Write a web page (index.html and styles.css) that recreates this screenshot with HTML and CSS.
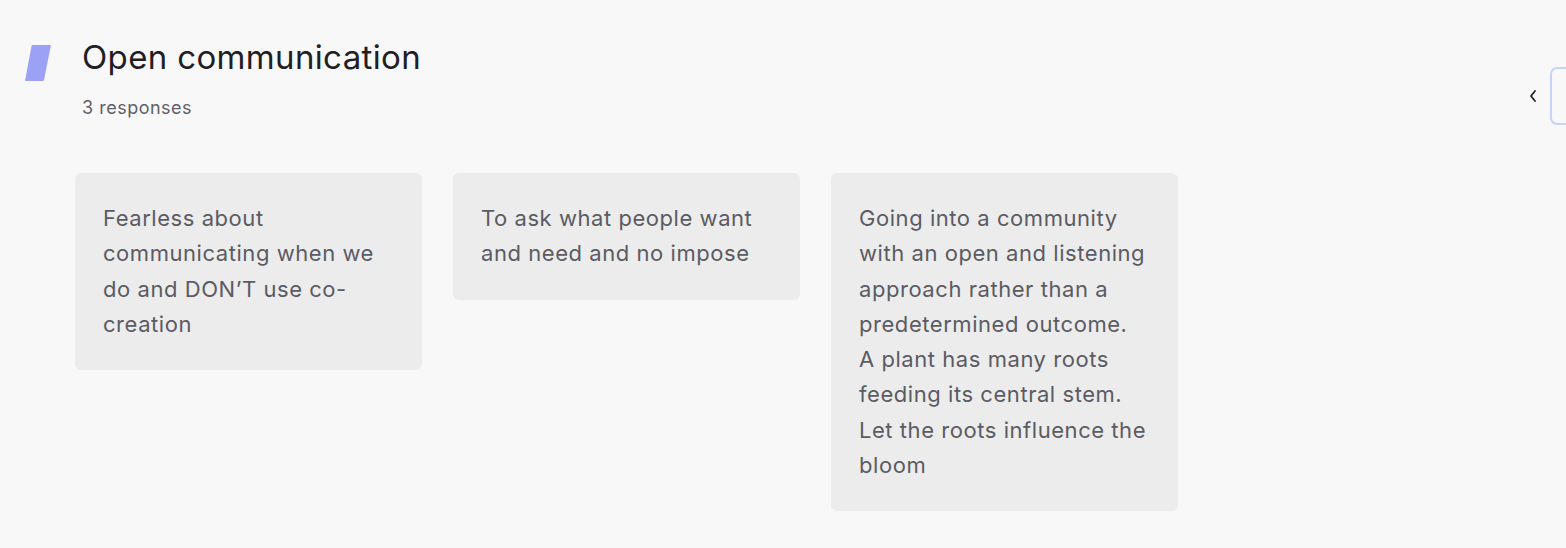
FILE: index.html
```html
<!DOCTYPE html>
<html lang="en">
<head>
<meta charset="utf-8">
<title>Open communication</title>
<link rel="stylesheet" href="styles.css">
</head>
<body>
<main class="page">
  <header class="header">
    <svg class="logo" width="28" height="40" viewBox="0 0 28 40" aria-hidden="true">
      <path d="M8.5 2 H26 Q27 2 26.8 3 L20 37 Q19.8 38 18.8 38 H2 Q1 38 1.2 37 L7.5 3 Q7.7 2 8.5 2 Z" fill="#9da1f5"/>
    </svg>
    <div class="titles">
      <h1 class="title">Open communication</h1>
      <p class="count">3 responses</p>
    </div>
  </header>
  <section class="cards">
    <article class="card">Fearless about communicating when we do and DON’T use co-creation</article>
    <article class="card">To ask what people want and need and no impose</article>
    <article class="card">Going into a community with an open and listening approach rather than a predetermined outcome. A plant has many roots feeding its central stem. Let the roots influence the bloom</article>
  </section>
</main>
<div class="side-toggle">
  <svg class="chevron" width="10" height="14" viewBox="0 0 10 14" aria-hidden="true">
    <path d="M7 2 L3 7 L7 12" fill="none" stroke="#222" stroke-width="1.8" stroke-linecap="round" stroke-linejoin="round"/>
  </svg>
  <div class="panel-edge"></div>
</div>
</body>
</html>
```
FILE: styles.css
```css
html, body {
  margin: 0;
  padding: 0;
  background: #f8f8f8;
  height: 100%;
}
body {
  font-family: Inter, "Noto Sans", sans-serif;
  color: #5b5b63;
  overflow: hidden;
}
.page {
  padding: 42px 0 0 24px;
}
.header {
  display: flex;
  align-items: flex-start;
  gap: 30px;
}
.logo {
  display: block;
  margin-top: 1px;
}
.titles {
  display: flex;
  flex-direction: column;
}
.title {
  margin: 0;
  font-size: 33px;
  font-weight: 400;
  line-height: 30px;
  color: #1f2024;
  letter-spacing: 0.35px;
}
.count {
  margin: 25px 0 0;
  font-size: 18px;
  line-height: 22px;
  color: #5f6068;
  letter-spacing: 0.5px;
}
.cards {
  display: flex;
  align-items: flex-start;
  gap: 31px;
  margin: 54px 0 0 51px;
}
.card {
  width: 288px;
  padding: 28px 31px 28px 28px;
  background: #ececec;
  border-radius: 6px;
  font-size: 22px;
  line-height: 35.25px;
  letter-spacing: 0.55px;
  color: #5b5b63;
}
.side-toggle {
  position: absolute;
  top: 67px;
  right: 0;
  display: flex;
  align-items: center;
  gap: 12px;
}
.chevron {
  display: block;
}
.panel-edge {
  width: 14px;
  height: 54px;
  border: 2px solid #c9d2f7;
  border-right: none;
  border-radius: 7px 0 0 7px;
  background: #f8f8f8;
}
```
